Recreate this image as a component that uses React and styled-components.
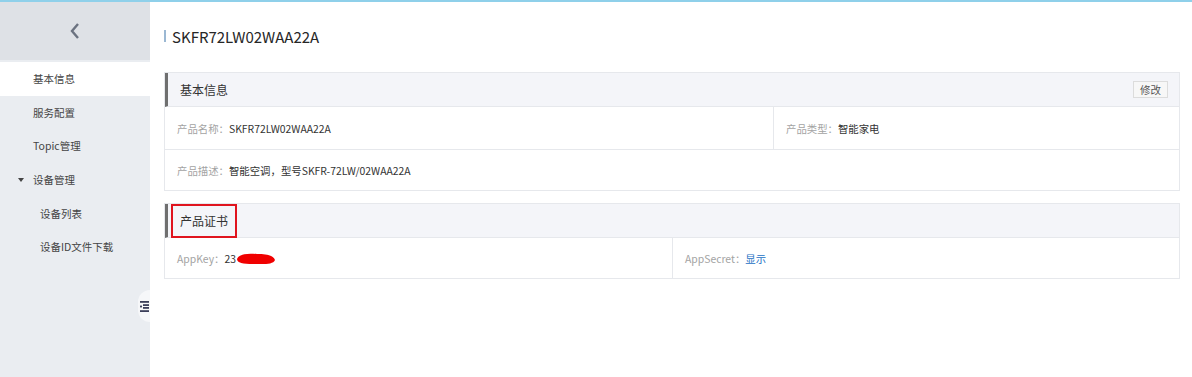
import React from 'react';
import styled, { createGlobalStyle } from 'styled-components';

const Global = createGlobalStyle`
  html, body { margin: 0; padding: 0; background: #fff; }
  body {
    font-family: "Noto Sans CJK SC", "Noto Sans", "Liberation Sans", sans-serif;
    font-size: 10.4px;
    color: #333;
  }
`;

const Page = styled.div`
  width: 1192px;
  height: 377px;
  display: flex;
  flex-direction: column;
  overflow: hidden;
`;

const TopLine = styled.div`
  height: 2px;
  background: #8fd0ea;
  flex: none;
`;

const Body = styled.div`
  flex: 1;
  display: flex;
  min-height: 0;
`;

const Sidebar = styled.aside`
  width: 150px;
  flex: none;
  background: #eaedf1;
  display: flex;
  flex-direction: column;
  position: relative;
`;

const BackBar = styled.div`
  height: 58px;
  background: #dee1e6;
  display: flex;
  align-items: center;
  justify-content: center;
`;

const Menu = styled.ul`
  list-style: none;
  margin: 2px 0 0;
  padding: 0;
`;

const MenuItem = styled.li`
  height: 33.6px;
  display: flex;
  align-items: center;
  padding-left: ${(p) => (p.$sub ? 40 : 33)}px;
  background: ${(p) => (p.$active ? '#fff' : 'transparent')};
  color: #444;
  font-size: 10.5px;
  position: relative;
`;

const Caret = styled.span`
  position: absolute;
  left: 18px;
  top: 50%;
  margin-top: -2px;
  width: 0;
  height: 0;
  border-left: 3.5px solid transparent;
  border-right: 3.5px solid transparent;
  border-top: 4px solid #444;
`;

const Handle = styled.div`
  position: absolute;
  right: 0;
  top: 288px;
  width: 12px;
  height: 32px;
  border-radius: 16px 0 0 16px;
  background: #f6f7f9;
  display: flex;
  align-items: center;
  justify-content: flex-end;
  padding-right: 1px;
  box-sizing: border-box;
`;

const Main = styled.main`
  flex: 1;
  padding: 0 12px 0 14px;
  display: flex;
  flex-direction: column;
`;

const Title = styled.h1`
  margin: 24px 0 0;
  height: 20px;
  display: flex;
  align-items: center;
  font-size: 15px;
  font-weight: 400;
  color: #262626;
  &::before {
    content: '';
    width: 2px;
    height: 12px;
    background: #9bb8d3;
    margin-right: 6px;
  }
`;

const Panel = styled.section`
  margin-top: ${(p) => p.$top}px;
  border: 1px solid #e6e8ec;
`;

const PanelHead = styled.div`
  height: 33px;
  background: #f4f5f9;
  border-left: 3px solid #6f6f6f;
  border-bottom: 1px solid #e6e8ec;
  display: flex;
  align-items: center;
  justify-content: space-between;
  padding: 0 11px 0 3px;
`;

const HeadTitle = styled.span`
  padding: 0 7px;
  height: 34px;
  display: flex;
  align-items: center;
  font-size: 12px;
  color: #333;
  box-sizing: border-box;
  border: 2px solid ${(p) => (p.$marked ? '#e0141e' : 'transparent')};
`;

const EditButton = styled.button`
  font-family: inherit;
  font-size: 10.5px;
  color: #555;
  background: #f7f7f7;
  border: 1px solid #dcdcdc;
  height: 17px;
  padding: 0 6px;
  line-height: 15px;
`;

const Row = styled.div`
  display: grid;
  grid-template-columns: ${(p) => p.$cols || '1fr'};
  border-top: ${(p) => (p.$first ? 'none' : '1px solid #e6e8ec')};
`;

const Cell = styled.div`
  height: ${(p) => p.$h || 42}px;
  display: flex;
  align-items: center;
  padding-left: 12px;
  border-left: ${(p) => (p.$divider ? '1px solid #e6e8ec' : 'none')};
  position: relative;
`;

const Label = styled.span`
  color: #a3a3a3;
`;

const Value = styled.span`
  color: ${(p) => (p.$link ? '#1a6fc4' : '#333')};
`;

const Scribble = styled.svg`
  position: absolute;
  left: 70px;
  top: 14px;
`;

function App() {
  return (
    <Page>
      <Global />
      <TopLine />
      <Body>
        <Sidebar>
          <BackBar>
            <svg width="12" height="18" viewBox="0 0 12 18">
              <path d="M9 2 L3 9 L9 16" fill="none" stroke="#6b7280" strokeWidth="2.4" />
            </svg>
          </BackBar>
          <Menu>
            <MenuItem $active>基本信息</MenuItem>
            <MenuItem>服务配置</MenuItem>
            <MenuItem>Topic管理</MenuItem>
            <MenuItem>
              <Caret />
              设备管理
            </MenuItem>
            <MenuItem $sub>设备列表</MenuItem>
            <MenuItem $sub>设备ID文件下载</MenuItem>
          </Menu>
          <Handle>
            <svg width="9" height="11" viewBox="0 0 9 11">
              <rect x="0" y="0" width="9" height="1.8" fill="#3b3f5a" />
              <rect x="3" y="3.2" width="6" height="1.8" fill="#3b3f5a" />
              <rect x="0" y="4.6" width="2" height="1.8" fill="#3b3f5a" />
              <rect x="3" y="6" width="6" height="1.8" fill="#3b3f5a" />
              <rect x="0" y="9.2" width="9" height="1.8" fill="#3b3f5a" />
            </svg>
          </Handle>
        </Sidebar>
        <Main>
          <Title>SKFR72LW02WAA22A</Title>
          <Panel $top={26}>
            <PanelHead>
              <HeadTitle>基本信息</HeadTitle>
              <EditButton>修改</EditButton>
            </PanelHead>
            <Row $first $cols="608px 1fr">
              <Cell>
                <Label>产品名称：</Label>
                <Value>SKFR72LW02WAA22A</Value>
              </Cell>
              <Cell $divider>
                <Label>产品类型：</Label>
                <Value>智能家电</Value>
              </Cell>
            </Row>
            <Row>
              <Cell $h={40}>
                <Label>产品描述：</Label>
                <Value>智能空调，型号SKFR-72LW/02WAA22A</Value>
              </Cell>
            </Row>
          </Panel>
          <Panel $top={12}>
            <PanelHead>
              <HeadTitle $marked>产品证书</HeadTitle>
            </PanelHead>
            <Row $first $cols="1fr 1fr">
              <Cell $h={40}>
                <Label>AppKey：</Label>
                <Value>23</Value>
                <Scribble width="42" height="14" viewBox="0 0 42 14">
                  <path
                    d="M2 7 C4 2 12 1 22 2 C32 2 38 3 40 8 C38 13 28 12 18 12 C8 12 2 11 2 7 Z"
                    fill="#f00000"
                  />
                </Scribble>
              </Cell>
              <Cell $h={40} $divider>
                <Label>AppSecret：</Label>
                <Value $link>显示</Value>
              </Cell>
            </Row>
          </Panel>
        </Main>
      </Body>
    </Page>
  );
}

export default App;
